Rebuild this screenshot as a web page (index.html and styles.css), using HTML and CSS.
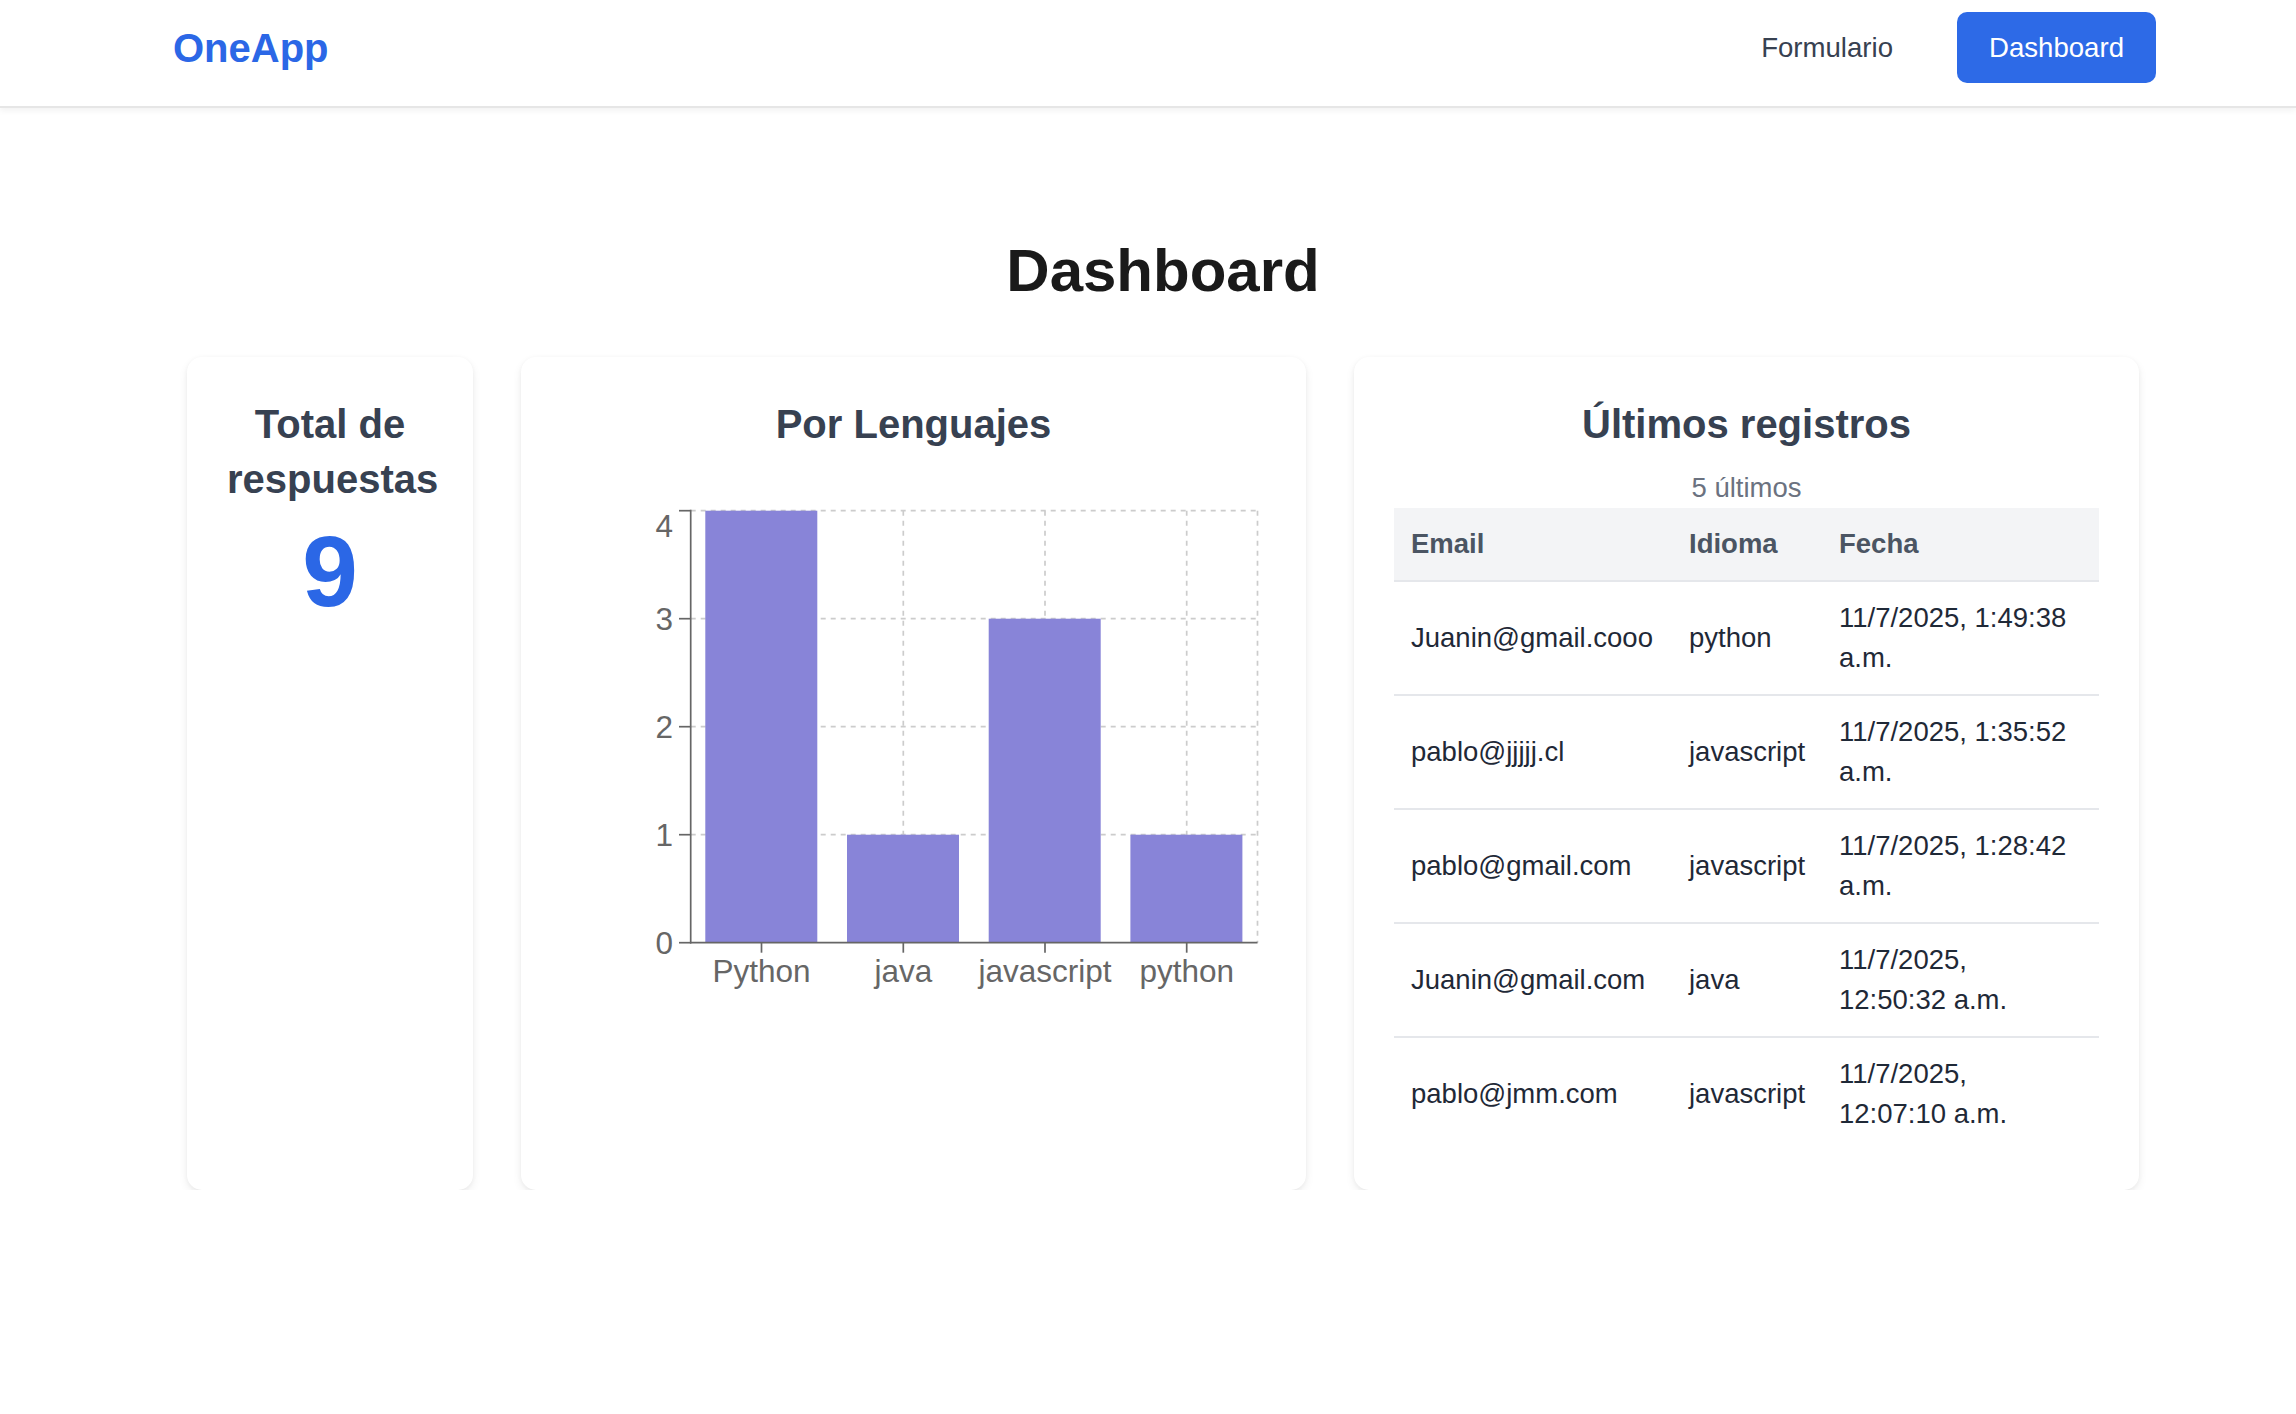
FILE: index.html
```html
<!DOCTYPE html>
<html lang="es">
<head>
<meta charset="utf-8">
<title>OneApp - Dashboard</title>
<link rel="stylesheet" href="styles.css">
</head>
<body>
<header class="topbar">
  <div class="topbar-inner">
    <a class="logo" href="#">OneApp</a>
    <nav class="nav">
      <a class="nav-link" href="#">Formulario</a>
      <a class="nav-link nav-active" href="#">Dashboard</a>
    </nav>
  </div>
</header>

<main class="main">
  <h1 class="page-title">Dashboard</h1>
  <div class="grid">
    <section class="card card-total">
      <h2 class="card-title">Total de respuestas</h2>
      <div class="total-number">9</div>
    </section>

    <section class="card">
      <h2 class="card-title">Por Lenguajes</h2>
      <div class="chart">
        <svg width="705" height="500" viewBox="0 0 705 500" xmlns="http://www.w3.org/2000/svg">
          <g class="grid-lines" stroke="#cccccc" stroke-width="1.7" stroke-dasharray="5 5" fill="none">
            <line x1="129.7" y1="8.7" x2="696.5" y2="8.7"/>
            <line x1="129.7" y1="116.7" x2="696.5" y2="116.7"/>
            <line x1="129.7" y1="224.7" x2="696.5" y2="224.7"/>
            <line x1="129.7" y1="332.7" x2="696.5" y2="332.7"/>
            <line x1="200.5" y1="8.7" x2="200.5" y2="440.7"/>
            <line x1="342.3" y1="8.7" x2="342.3" y2="440.7"/>
            <line x1="484" y1="8.7" x2="484" y2="440.7"/>
            <line x1="625.7" y1="8.7" x2="625.7" y2="440.7"/>
            <line x1="696.5" y1="8.7" x2="696.5" y2="440.7"/>
          </g>
          <g fill="#8884d8">
            <rect x="144.3" y="8.7" width="112" height="432"/>
            <rect x="286" y="332.7" width="112" height="108"/>
            <rect x="427.7" y="116.7" width="112" height="324"/>
            <rect x="569.4" y="332.7" width="112" height="108"/>
          </g>
          <g stroke="#666666" stroke-width="1.7" fill="none">
            <line x1="129.7" y1="7.8" x2="129.7" y2="441.5"/>
            <line x1="129" y1="440.7" x2="696.5" y2="440.7"/>
            <line x1="118" y1="8.7" x2="129.7" y2="8.7"/>
            <line x1="118" y1="116.7" x2="129.7" y2="116.7"/>
            <line x1="118" y1="224.7" x2="129.7" y2="224.7"/>
            <line x1="118" y1="332.7" x2="129.7" y2="332.7"/>
            <line x1="118" y1="440.7" x2="129.7" y2="440.7"/>
            <line x1="200.5" y1="440.7" x2="200.5" y2="450.7"/>
            <line x1="342.3" y1="440.7" x2="342.3" y2="450.7"/>
            <line x1="484" y1="440.7" x2="484" y2="450.7"/>
            <line x1="625.7" y1="440.7" x2="625.7" y2="450.7"/>
          </g>
          <g class="tick-text" fill="#666666" text-anchor="end">
            <text x="112" y="35">4</text>
            <text x="112" y="128">3</text>
            <text x="112" y="236">2</text>
            <text x="112" y="344">1</text>
            <text x="112" y="452">0</text>
          </g>
          <g class="tick-text" fill="#666666" text-anchor="middle">
            <text x="200.5" y="480">Python</text>
            <text x="342.3" y="480">java</text>
            <text x="484" y="480">javascript</text>
            <text x="625.7" y="480">python</text>
          </g>
        </svg>
      </div>
    </section>

    <section class="card">
      <h2 class="card-title">Últimos registros</h2>
      <p class="subtitle">5 últimos</p>
      <table class="records">
        <colgroup>
          <col class="col-email">
          <col class="col-lang">
          <col class="col-date">
        </colgroup>
        <thead>
          <tr><th>Email</th><th>Idioma</th><th>Fecha</th></tr>
        </thead>
        <tbody>
          <tr><td>Juanin@gmail.cooo</td><td>python</td><td>11/7/2025, 1:49:38 a.m.</td></tr>
          <tr><td>pablo@jjjjj.cl</td><td>javascript</td><td>11/7/2025, 1:35:52 a.m.</td></tr>
          <tr><td>pablo@gmail.com</td><td>javascript</td><td>11/7/2025, 1:28:42 a.m.</td></tr>
          <tr><td>Juanin@gmail.com</td><td>java</td><td>11/7/2025, 12:50:32 a.m.</td></tr>
          <tr><td>pablo@jmm.com</td><td>javascript</td><td>11/7/2025, 12:07:10 a.m.</td></tr>
        </tbody>
      </table>
    </section>
  </div>
</main>
</body>
</html>
```

FILE: styles.css
```css
* { box-sizing: border-box; }

html, body {
  margin: 0;
  padding: 0;
  background: #ffffff;
}

body {
  font-family: "Liberation Sans", Arial, Helvetica, sans-serif;
  color: #1f2937;
  font-size: 27.5px;
  line-height: 40px;
}

/* Header */
.topbar {
  height: 108px;
  background: #ffffff;
  border-bottom: 2px solid #e6e6e6;
  box-shadow: 0 3px 6px rgba(0, 0, 0, 0.05);
  padding-top: 12px;
}

.topbar-inner {
  width: 1983px;
  margin-left: 173px;
  display: flex;
  align-items: center;
  justify-content: space-between;
  height: 71px;
}

.logo {
  font-size: 40px;
  font-weight: 700;
  line-height: 1;
  color: #2b67e6;
  text-decoration: none;
}

.nav {
  display: flex;
  align-items: center;
  gap: 32px;
}

.nav-link {
  display: block;
  padding: 15px 32px;
  font-size: 27.6px;
  line-height: 41px;
  color: #374151;
  text-decoration: none;
  border-radius: 10px;
}

.nav-active {
  background: #2d6ae7;
  color: #ffffff;
}

/* Main */
.main {
  width: 1952px;
  margin-left: 187px;
}

.page-title {
  margin: 133px 0 56px;
  font-size: 60px;
  line-height: 60px;
  font-weight: 700;
  text-align: center;
  color: #1a1a1a;
}

.grid {
  display: grid;
  grid-template-columns: 286px 785px 785px;
  gap: 48px;
  align-items: stretch;
}

.card {
  background: #ffffff;
  border-radius: 15px;
  padding: 40px;
  box-shadow: 0 4px 10px rgba(0, 0, 0, 0.07), 0 1px 4px rgba(0, 0, 0, 0.04);
  text-align: center;
}

.card-title {
  margin: 0 0 16px;
  font-size: 40px;
  line-height: 55px;
  font-weight: 700;
  color: #374151;
}

.total-number {
  margin-top: -2px;
  font-size: 100px;
  line-height: 100px;
  font-weight: 700;
  color: #2b67e6;
}

.chart {
  margin-top: 50px;
  text-align: left;
}

.chart svg {
  display: block;
}

.tick-text {
  font-family: "Liberation Sans", Arial, sans-serif;
  font-size: 31.5px;
}

.subtitle {
  margin: 0;
  font-size: 27.5px;
  line-height: 40px;
  color: #6b7280;
}

.records {
  width: 705px;
  border-collapse: collapse;
  table-layout: fixed;
  text-align: left;
}

.col-email { width: 278px; }
.col-lang { width: 150px; }
.col-date { width: 277px; }

.records th {
  background: #f3f4f6;
  padding: 16px 17px;
  font-size: 27.5px;
  line-height: 40px;
  font-weight: 700;
  color: #4b5563;
  border-bottom: 2px solid #e5e7eb;
}

.records td {
  padding: 16px 17px;
  font-size: 27.5px;
  line-height: 40px;
  color: #1f2937;
  border-bottom: 2px solid #e5e7eb;
  vertical-align: middle;
}

.records td:last-child {
  padding-right: 24px;
}

.records tbody tr:last-child td {
  border-bottom: none;
}
```
